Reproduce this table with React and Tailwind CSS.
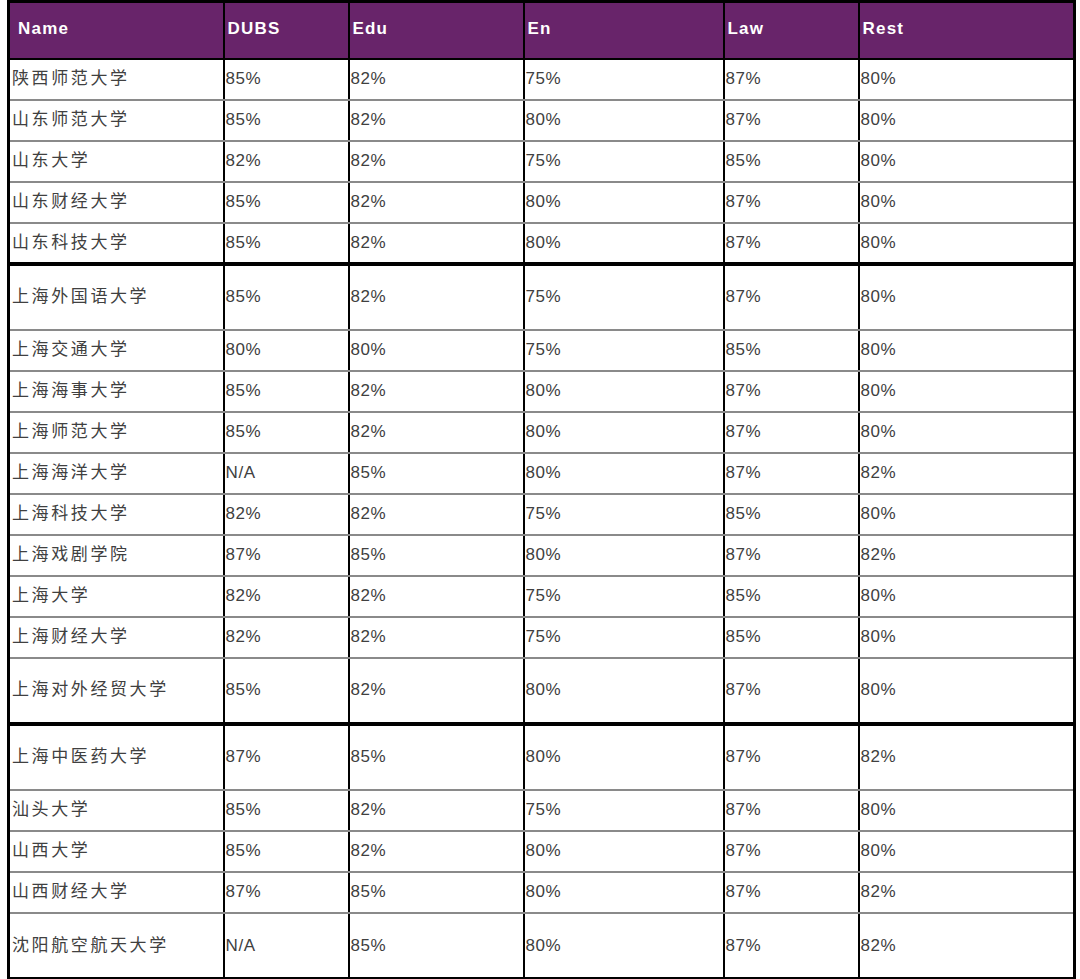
import React from "react";

const rows = [
  ["陕西师范大学", "85%", "82%", "75%", "87%", "80%"],
  ["山东师范大学", "85%", "82%", "80%", "87%", "80%"],
  ["山东大学", "82%", "82%", "75%", "85%", "80%"],
  ["山东财经大学", "85%", "82%", "80%", "87%", "80%"],
  ["山东科技大学", "85%", "82%", "80%", "87%", "80%"],
  ["上海外国语大学", "85%", "82%", "75%", "87%", "80%"],
  ["上海交通大学", "80%", "80%", "75%", "85%", "80%"],
  ["上海海事大学", "85%", "82%", "80%", "87%", "80%"],
  ["上海师范大学", "85%", "82%", "80%", "87%", "80%"],
  ["上海海洋大学", "N/A", "85%", "80%", "87%", "82%"],
  ["上海科技大学", "82%", "82%", "75%", "85%", "80%"],
  ["上海戏剧学院", "87%", "85%", "80%", "87%", "82%"],
  ["上海大学", "82%", "82%", "75%", "85%", "80%"],
  ["上海财经大学", "82%", "82%", "75%", "85%", "80%"],
  ["上海对外经贸大学", "85%", "82%", "80%", "87%", "80%"],
  ["上海中医药大学", "87%", "85%", "80%", "87%", "82%"],
  ["汕头大学", "85%", "82%", "75%", "87%", "80%"],
  ["山西大学", "85%", "82%", "80%", "87%", "80%"],
  ["山西财经大学", "87%", "85%", "80%", "87%", "82%"],
  ["沈阳航空航天大学", "N/A", "85%", "80%", "87%", "82%"],
];

// rows that are taller in the original sheet
const tall = [5, 14, 15, 19];
// rows starting a new block get a heavy rule on top
const heavy = [5, 15];

const headers = ["Name", "DUBS", "Edu", "En", "Law", "Rest"];

export default function App() {
  return (
    <div className="min-h-screen bg-white pl-[7px] font-['Liberation_Sans','Noto_Sans_CJK_SC',sans-serif]">
      <table className="w-[1066px] table-fixed border-collapse border-[3px] border-black">
        <colgroup>
          <col className="w-[215px]" />
          <col className="w-[125px]" />
          <col className="w-[175px]" />
          <col className="w-[200px]" />
          <col className="w-[135px]" />
          <col className="w-[216px]" />
        </colgroup>
        <thead>
          <tr className="h-[57px] bg-[#68246a]">
            {headers.map((h, i) => (
              <th
                key={h}
                className={
                  "border-2 border-black pb-[3px] text-left align-middle text-[17px] font-bold tracking-[1.2px] text-white " +
                  (i === 0 ? "pl-[8px]" : "pl-[3px]")
                }
              >
                {h}
              </th>
            ))}
          </tr>
        </thead>
        <tbody>
          {rows.map((r, idx) => (
            <tr
              key={r[0]}
              className={
                (tall.includes(idx) ? "h-[66px] " : "h-[41px] ") +
                (heavy.includes(idx) ? "border-t-[4px] border-t-black" : "")
              }
            >
              {r.map((c, i) => (
                <td
                  key={i}
                  className={
                    "border-x-2 border-x-black border-y-2 border-y-[#8a8a8a] align-middle text-[17px] text-[#404040] " +
                    (i === 0 ? "pl-[2px] tracking-[2.6px]" : "pl-[1px] tracking-[0.6px]")
                  }
                >
                  {c}
                </td>
              ))}
            </tr>
          ))}
        </tbody>
      </table>
    </div>
  );
}
